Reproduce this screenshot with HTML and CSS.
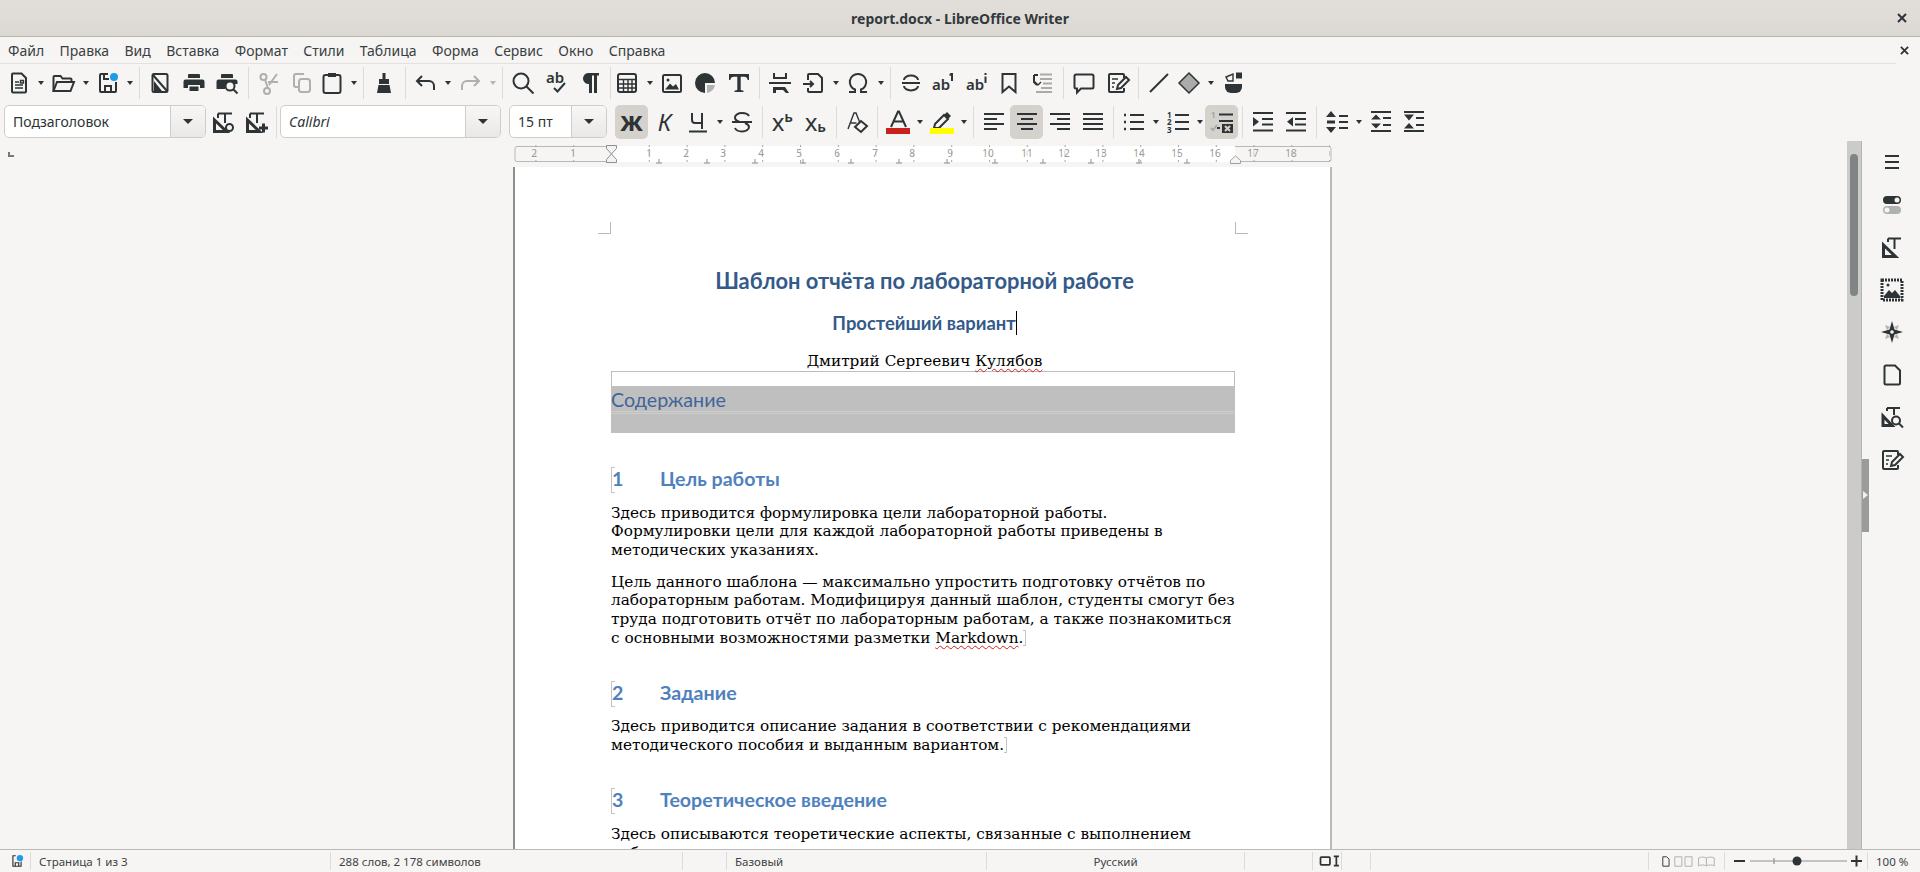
FILE: index.html
```html
<!DOCTYPE html>
<html lang="ru">
<head>
  <meta charset="UTF-8">
  <title>report.docx - LibreOffice Writer</title>
  <link rel="stylesheet" href="styles.css">
</head>
<body>

  <header class="titlebar">
    <span class="title">report.docx - LibreOffice Writer</span>
    <svg class="title-close" viewBox="0 0 10 10"><path d="M1 1l8 8M9 1l-8 8"/></svg>
  </header>

  <div class="menubar">
    <nav class="menu">
      <span>Файл</span><span>Правка</span><span>Вид</span><span>Вставка</span><span>Формат</span><span>Стили</span><span>Таблица</span><span>Форма</span><span>Сервис</span><span>Окно</span><span>Справка</span>
    </nav>
    <svg class="menu-close" viewBox="0 0 10 10"><path d="M1 1l8 8M9 1l-8 8"/></svg>
  </div>

  <!-- standard toolbar -->
  <div class="toolbar toolbar-std">
    <span class="btn"><svg class="ic" viewBox="0 0 24 24"><path d="M6 2.500h8.500l4.500 4.500v13.500a1 1 0 0 1-1 1H6a1 1 0 0 1-1-1v-17a1 1 0 0 1 1-1z"/><path class="thin" d="M8 11h4M8 14h8M8 17h8"/><path class="thin" d="M13.500 9.500h3v2.500h-3z"/></svg></span><span class="arrow"></span>
    <span class="btn"><svg class="ic" viewBox="0 0 24 24"><path d="M2.500 20V6a1 1 0 0 1 1-1h6l2 2.500h8a1 1 0 0 1 1 1V11"/><path d="M2.500 20l3.500-9h17l-3.500 9z"/></svg></span><span class="arrow"></span>
    <span class="btn"><svg class="ic" viewBox="0 0 24 24"><path d="M12 3H5a1 1 0 0 0-1 1v16a1 1 0 0 0 1 1h14a1 1 0 0 0 1-1v-9"/><path d="M8 3v5h5"/><path d="M9 20v-5h6v5"/><circle class="blue" cx="18" cy="6" r="4"/></svg></span><span class="arrow"></span>
    <span class="sep"></span>
    <span class="btn"><svg class="ic" viewBox="0 0 24 24"><rect x="4.500" y="3" width="15" height="18" rx="1.500"/><path d="M5 4l14 16"/><path class="f" d="M6 10l8 10H6z"/></svg></span>
    <span class="btn"><svg class="ic" viewBox="0 0 24 24"><path class="f" d="M7 3h10a1 1 0 0 1 1 1v3H6V4a1 1 0 0 1 1-1zM3.500 8.500h17a2 2 0 0 1 2 2V17H18v-3H6v3H1.500v-6.500a2 2 0 0 1 2-2zM7.500 15.500h9V20h-9z"/></svg></span>
    <span class="btn"><svg class="ic" viewBox="0 0 24 24"><path class="f" d="M7 3h10a1 1 0 0 1 1 1v3H6V4a1 1 0 0 1 1-1zM3.500 8.500h17a2 2 0 0 1 2 2V13H10v5H1.500v-7.500a2 2 0 0 1 2-2z"/><circle class="halo" cx="15" cy="15" r="4.500"/><path d="M18.500 18.500l4 4"/></svg></span>
    <span class="sep"></span>
    <span class="btn"><svg class="ic off" viewBox="0 0 24 24"><circle cx="6.500" cy="6" r="3"/><circle cx="10" cy="20" r="3"/><path d="M8 8.500l3 9M12 14L20 3M11 11h10"/></svg></span>
    <span class="btn"><svg class="ic off" viewBox="0 0 24 24"><path d="M8 16H6a2 2 0 0 1-2-2V5a2 2 0 0 1 2-2h8"/><rect x="9" y="8" width="11" height="13" rx="2.500"/></svg></span>
    <span class="btn tight"><svg class="ic" viewBox="0 0 24 24"><rect x="3.500" y="4" width="17" height="18" rx="2"/><path class="f" d="M8 2h8v4H8z"/></svg></span><span class="arrow"></span>
    <span class="sep"></span>
    <span class="btn"><svg class="ic" viewBox="0 0 24 24"><path class="f" d="M10.500 2h3v6h3.500v5H7V8h3.500z"/><path class="f" d="M6.500 14h11l1.500 8H5z"/></svg></span>
    <span class="sep"></span>
    <span class="btn"><svg class="ic" viewBox="0 0 24 24"><path d="M8 5L3 10l5 5"/><path d="M3 10h12a5 5 0 0 1 5 5v4"/></svg></span><span class="arrow"></span>
    <span class="btn"><svg class="ic off" viewBox="0 0 24 24"><path d="M16 5l5 5-5 5"/><path d="M21 10H9a5 5 0 0 0-5 5v4"/></svg></span><span class="arrow arrow-off"></span>
    <span class="sep"></span>
    <span class="btn"><svg class="ic" viewBox="0 0 24 24"><circle cx="10" cy="10" r="7.500"/><path d="M15.500 15.500l7 7"/></svg></span>
    <span class="btn"><svg class="ic" viewBox="0 0 24 24"><text class="ic-text" x="2" y="12">ab</text><path d="M10 17l3.500 3.500L21 12"/></svg></span>
    <span class="btn"><svg class="ic" viewBox="0 0 24 24"><path class="f" d="M10 2h11v2.500h-2V22h-3V4.500h-2V22h-3v-9a5.500 5.500 0 0 1-1-11z"/></svg></span>
    <span class="sep"></span>
    <span class="btn tight"><svg class="ic" viewBox="0 0 24 24"><rect x="3" y="3" width="18" height="18" rx="2"/><path class="thin" d="M3 8.500h18M3 13h18M3 17h18M8.500 8v13M13 8v13M17 8v13"/></svg></span><span class="arrow"></span>
    <span class="btn"><svg class="ic" viewBox="0 0 24 24"><rect x="3" y="4" width="18" height="17" rx="1.500"/><circle class="f" cx="8" cy="9" r="1.500"/><path class="f" d="M5 18.500l5-6 3 3 3-2.500 3 5.500z"/></svg></span>
    <span class="btn"><svg class="ic" viewBox="0 0 24 24"><path class="f" d="M12 2a10 10 0 1 0 0 20v-10h10A10 10 0 0 0 12 2z"/><path class="fg" d="M14 14h8a10 10 0 0 1-8 8z"/></svg></span>
    <span class="btn"><svg class="ic" viewBox="0 0 24 24"><path class="f" d="M2 3h20v6h-1.300c-.4-2-1.500-3.200-3.700-3.200h-3.300V19l2.800.8V21H7.500v-1.200l2.800-.8V5.800H7c-2.200 0-3.300 1.200-3.700 3.200H2z"/></svg></span>
    <span class="sep"></span>
    <span class="btn"><svg class="ic" viewBox="0 0 24 24"><path d="M6 2v5h12V2"/><path d="M1 12h22"/><path class="f" d="M5 16h12l4 6h-3l-3-3H8v3H5z"/></svg></span>
    <span class="btn"><svg class="ic" viewBox="0 0 24 24"><path d="M6 9V4a1 1 0 0 1 1-1h9l4 4v13a1 1 0 0 1-1 1H7a1 1 0 0 1-1-1v-3"/><path d="M1 13h10M8 10l3 3-3 3"/></svg></span><span class="arrow"></span>
    <span class="btn"><svg class="ic" viewBox="0 0 24 24"><path d="M3 21h6v-2.500A8 8 0 0 1 12 3a8 8 0 0 1 3 15.500V21h6"/></svg></span><span class="arrow"></span>
    <span class="sep"></span>
    <span class="btn"><svg class="ic" viewBox="0 0 24 24"><path d="M3 12h18M5 9a7 4.500 0 0 1 14 0M5 15a7 4.500 0 0 0 14 0"/></svg></span>
    <span class="btn"><svg class="ic" viewBox="0 0 24 24"><text class="ic-text" x="0" y="19">ab</text><path class="f" d="M18.500 2h2.500v8h-2V4.500l-1.500.5V3.300z"/></svg></span>
    <span class="btn"><svg class="ic" viewBox="0 0 24 24"><text class="ic-text" x="0" y="19">ab</text><path class="f" d="M18.500 2h2v2h-2zM18.500 5.500h2V12h-2z"/></svg></span>
    <span class="btn tight-sm"><svg class="ic" viewBox="0 0 24 24"><path d="M5.500 3h13v18L12 15.500 5.500 21z"/></svg></span>
    <span class="btn"><svg class="ic" viewBox="0 0 24 24"><path d="M3 4h4M3 4v7l3 3"/><path d="M4 11l3 3 3-3" class="thin"/><path class="grey-line" d="M9 3.500h12M9 8h12M12 12.500h9M10 17h11M5 21h16"/></svg></span>
    <span class="sep"></span>
    <span class="btn"><svg class="ic" viewBox="0 0 24 24"><path d="M4 3.500h16a1.500 1.500 0 0 1 1.500 1.500v11a1.500 1.500 0 0 1-1.500 1.500H9L5 21.500v-4H4A1.500 1.500 0 0 1 2.500 16V5A1.500 1.500 0 0 1 4 3.500z"/></svg></span>
    <span class="btn"><svg class="ic" viewBox="0 0 24 24"><path d="M18 7V4a1 1 0 0 0-1-1H4a1 1 0 0 0-1 1v16a1 1 0 0 0 1 1h13a1 1 0 0 0 1-1v-3"/><path class="thin" d="M6 8h6M6 12h3M6 16h2"/><path d="M11 18l1-4 8-8 3 3-8 8z"/></svg></span>
    <span class="sep"></span>
    <span class="btn"><svg class="ic" viewBox="0 0 24 24"><path d="M3 21L21 3"/></svg></span>
    <span class="btn tight"><svg class="ic ic-shape" viewBox="0 0 24 24"><path d="M12 2l10 10-10 10L2 12z"/></svg></span><span class="arrow"></span>
    <span class="btn"><svg class="ic" viewBox="0 0 24 24"><path class="f" d="M4 13h17v3a6 6 0 0 1-6 6H10a6 6 0 0 1-6-6z"/><path class="f" d="M15 1.500h6v6h-6z"/><path class="thin" d="M5 6l7-3v7H7z"/></svg></span>
  </div>

  <!-- formatting toolbar -->
  <div class="toolbar toolbar-fmt">
    <div class="combo combo-style"><span class="combo-text">Подзаголовок</span><span class="combo-arrow"></span></div>
    <span class="btn"><svg class="ic" viewBox="0 0 24 24"><path class="heavy" d="M3.500 21.500V10l12 11.500z"/><path d="M7 3.500h14M14 3.500V13M7 3.500V8"/><circle class="halo" cx="18.500" cy="17.500" r="3.500"/></svg></span>
    <span class="btn"><svg class="ic" viewBox="0 0 24 24"><path class="heavy" d="M3.500 21.500V10l12 11.500z"/><path d="M6 3.500h14M13 3.500V13M6 3.500V8"/><path class="heavy" d="M15 18h9M19.500 13.500v9"/></svg></span>
    <span class="sep"></span>
    <div class="combo combo-font"><span class="combo-text combo-italic">Calibri</span><span class="combo-arrow"></span></div>
    <div class="combo combo-size"><span class="combo-text">15 пт</span><span class="combo-arrow"></span></div>
    <span class="btn active glyph glyph-bold">Ж</span>
    <span class="btn glyph glyph-italic">К</span>
    <span class="btn"><svg class="ic" viewBox="0 0 24 24"><path d="M6 3v7a3 3 0 0 0 3 3h7M16 3v16M3 21.500h18"/></svg></span><span class="arrow"></span>
    <span class="btn"><svg class="ic" viewBox="0 0 24 24"><path d="M19 6c-1-2-3-3-7-3S5 5 5 7.500 7 11 9 11.500M2 12h20M15 13c2.500 1 4 2 4 4s-2.500 4.500-7 4.500c-3.500 0-6-1-7-3.500"/></svg></span>
    <span class="sep"></span>
    <span class="btn glyph glyph-script">х<span class="script-up">ь</span></span>
    <span class="btn glyph glyph-script">х<span class="script-down">ь</span></span>
    <span class="sep"></span>
    <span class="btn"><svg class="ic" viewBox="0 0 24 24"><path class="thin" d="M3 19l6-16h2l4 10M5.500 13h6"/><path d="M10 17l6-6 6 5-6 6z"/></svg></span>
    <span class="sep"></span>
    <span class="btn"><svg class="ic" viewBox="0 0 24 24"><path d="M5 17L12 1.500h1L20 17M7.500 11.500h10"/><path class="red" d="M0 18h24v6H0z"/></svg></span><span class="arrow"></span>
    <span class="btn"><svg class="ic" viewBox="0 0 24 24"><path d="M5 14l9-9 4 4-9 9H4z"/><path class="f" d="M14 5l3-3 4 4-3 3z"/><path class="yellow" d="M0 18h24v6H0z"/></svg></span><span class="arrow"></span>
    <span class="sep"></span>
    <span class="btn"><svg class="ic" viewBox="0 0 24 24"><path d="M2 4h20M2 9h13M2 14h20M2 19h13"/></svg></span>
    <span class="btn active"><svg class="ic" viewBox="0 0 24 24"><path d="M2 4h20M6 9h12M2 14h20M6 19h12"/></svg></span>
    <span class="btn"><svg class="ic" viewBox="0 0 24 24"><path d="M2 4h20M9 9h13M2 14h20M9 19h13"/></svg></span>
    <span class="btn"><svg class="ic" viewBox="0 0 24 24"><path d="M2 4h20M2 9h20M2 14h20M2 19h20"/></svg></span>
    <span class="sep"></span>
    <span class="btn"><svg class="ic" viewBox="0 0 24 24"><path d="M8 5h14M8 12h14M8 19h14"/><path class="dots" d="M2 5h2M2 12h2M2 19h2"/></svg></span><span class="arrow"></span>
    <span class="btn"><svg class="ic" viewBox="0 0 24 24"><text class="ic-num" x="1" y="7.500">1</text><text class="ic-num" x="1" y="15">2</text><text class="ic-num" x="1" y="22.500">3</text><path d="M9 5h14M9 12h14M9 19h14"/></svg></span><span class="arrow"></span>
    <span class="btn active"><svg class="ic" viewBox="0 0 24 24"><text class="ic-num ic-num-off" x="1" y="8">1</text><path d="M9 4.500h14M9 11h14M7 18h3"/><path class="grey-line" d="M1 18l2 2 4-5"/><path class="f" d="M12 14h11v9H12z"/><path class="xmark" d="M15 16l5 5M20 16l-5 5"/></svg></span>
    <span class="sep"></span>
    <span class="btn"><svg class="ic" viewBox="0 0 24 24"><path d="M2 3h20M11 9h11M11 14.500h11M2 20.500h20"/><path class="f" d="M2 7l6 4.800-6 4.800z"/></svg></span>
    <span class="btn"><svg class="ic" viewBox="0 0 24 24"><path d="M2 3h20M11 9h11M11 14.500h11M2 20.500h20"/><path class="f" d="M9 7l-6 4.800 6 4.800z"/></svg></span>
    <span class="sep"></span>
    <span class="btn"><svg class="ic" viewBox="0 0 24 24"><path d="M14 6h9M14 12h9M14 18h9"/><path class="f" d="M6 1l5 6H1zM1 17h10l-5 6zM2 10.500h8v3H2z"/></svg></span><span class="arrow"></span>
    <span class="btn"><svg class="ic" viewBox="0 0 24 24"><path d="M2 2h20M14 8h8M14 15h8M2 21h20"/><path class="f" d="M7 4.500l5 5H2zM2 13.500h10l-5 5z"/></svg></span>
    <span class="btn"><svg class="ic" viewBox="0 0 24 24"><path d="M2 2h20M14 8h8M14 15h8M2 21h20"/><path class="f" d="M2 4.500h10l-5 6zM7 13l5 5.500H2z"/></svg></span>
  </div>

  <main class="workspace">
    <div class="doc-column">
      <div class="ruler-row">
        <span class="ruler-corner"></span>
        <svg class="ruler" viewBox="0 0 822 22">
          <defs>
            <pattern id="ticks" x="59" y="0" width="37.800" height="22" patternUnits="userSpaceOnUse">
              <path d="M0 7v5" stroke="#a5a5a5" fill="none"/>
            </pattern>
            <pattern id="dots" x="97" y="0" width="37.800" height="22" patternUnits="userSpaceOnUse">
              <path d="M.5 1v2M.5 16v2" stroke="#a5a5a5" fill="none"/>
            </pattern>
          </defs>
          <rect x="1" y="2.500" width="816" height="15" rx="2" fill="#f6f5f4" stroke="#b8b8b6"/>
          <rect x="96" y="2" width="625" height="16" fill="#fff"/>
          <rect x="2" y="3" width="814" height="14" fill="url(#ticks)"/>
          <rect x="2" y="0" width="814" height="19" fill="url(#dots)"/>
          <g class="ruler-nums">
            <text x="20" y="13">2</text><text x="59" y="13">1</text><text x="135" y="13">1</text><text x="172" y="13">2</text><text x="209" y="13">3</text><text x="247" y="13">4</text><text x="285" y="13">5</text><text x="323" y="13">6</text><text x="361" y="13">7</text><text x="398" y="13">8</text><text x="436" y="13">9</text><text x="474" y="13">10</text><text x="513" y="13">11</text><text x="550" y="13">12</text><text x="587" y="13">13</text><text x="625" y="13">14</text><text x="663" y="13">15</text><text x="701" y="13">16</text><text x="739" y="13">17</text><text x="777" y="13">18</text>
          </g>
          <path d="M145 15v4M142 19h6M193 15v4M190 19h6M241 15v4M238 19h6M289 15v4M286 19h6M337 15v4M334 19h6M385 15v4M382 19h6M433 15v4M430 19h6M481 15v4M478 19h6M529 15v4M526 19h6M577 15v4M574 19h6M625 15v4M622 19h6M673 15v4M670 19h6" stroke="#8d8d8d" fill="none"/>
          <path d="M92.500 1.500h10v3L97.500 10l-5-5.500zM92.500 18.500h10v-3L97.500 10l-5 5.500z" fill="#f3f3f1" stroke="#8f8f8f"/>
          <path d="M716.500 19.500v-3l5-4.500 5 4.500v3z" fill="#f6f5f4" stroke="#a0a0a0"/>
        </svg>
      </div>
      <div class="canvas">
        <article class="page">
          <span class="crop crop-left"></span>
          <span class="crop crop-right"></span>
          <h1 class="doc-title">Шаблон отчёта по лабораторной работе</h1>
          <h2 class="doc-sub"><span class="cursor">Простейший вариант</span></h2>
          <p class="doc-author">Дмитрий Сергеевич <span class="typo">Кулябов</span></p>
          <div class="toc-empty"></div>
          <div class="toc">
            <div class="toc-head">Содержание</div>
            <div class="toc-body"></div>
          </div>
          <h3 class="section"><span class="section-num">1</span>Цель работы</h3>
          <p class="para">Здесь приводится формулировка цели лабораторной работы.<br>Формулировки цели для каждой лабораторной работы приведены в<br>методических указаниях.</p>
          <p class="para">Цель данного шаблона — максимально упростить подготовку отчётов по<br>лабораторным работам. Модифицируя данный шаблон, студенты смогут без<br>труда подготовить отчёт по лабораторным работам, а также познакомиться<br>с основными возможностями разметки <span class="typo">Markdown</span>.<span class="para-end"></span></p>
          <h3 class="section"><span class="section-num">2</span>Задание</h3>
          <p class="para">Здесь приводится описание задания в соответствии с рекомендациями<br>методического пособия и выданным вариантом.<span class="para-end"></span></p>
          <h3 class="section"><span class="section-num">3</span>Теоретическое введение</h3>
          <p class="para">Здесь описываются теоретические аспекты, связанные с выполнением<br>работы.</p>
        </article>
      </div>
    </div>

    <div class="scrollbar"><span class="scroll-thumb"></span></div>

    <aside class="sidebar">
      <span class="sidebar-handle"></span>
      <div class="sidebar-tabs">
        <svg class="ic" viewBox="0 0 24 24"><path d="M5 6h14M5 12h14M5 18h14"/></svg>
        <svg class="ic" viewBox="0 0 24 24"><rect class="f" x="3" y="3" width="18" height="8" rx="4"/><circle class="white" cx="17" cy="7" r="2.500"/><rect class="fg" x="3" y="13" width="18" height="8" rx="4"/><circle class="white" cx="7" cy="17" r="2.500"/></svg>
        <svg class="ic" viewBox="0 0 24 24"><path class="heavy" d="M3.500 21.500V10l12 11.500z"/><path d="M8 3.500h13M14.500 3.500V14M8 3.500V7"/></svg>
        <svg class="ic" viewBox="0 0 24 24"><rect class="dash-frame" x="2" y="2" width="20" height="20"/><path class="f" d="M4 20v-2l5-6 3 3 3-3 5 6v2z"/><circle class="f" cx="8" cy="7" r="1.500"/></svg>
        <svg class="ic" viewBox="0 0 24 24"><path class="fg" d="M5 5l5 2-3 3zM19 5l-2 5-3-3zM5 19l2-5 3 3zM19 19l-5-2 3-3z"/><path class="f" d="M12 1l2.500 8.500L23 12l-8.500 2.500L12 23l-2.500-8.500L1 12l8.500-2.500z"/><circle class="white" cx="12" cy="12" r="1.800"/></svg>
        <svg class="ic" viewBox="0 0 24 24"><path d="M6 2.500h9l5 5V20a1.500 1.500 0 0 1-1.500 1.500H6A1.500 1.500 0 0 1 4.500 20V4A1.500 1.500 0 0 1 6 2.500z"/></svg>
        <svg class="ic" viewBox="0 0 24 24"><path class="heavy" d="M3 20.500V11l9 9.500z"/><path d="M7 3h13M14 3v7M7 3v3"/><circle class="halo" cx="16" cy="15.500" r="4"/><path d="M19 18.500l4 4"/></svg>
        <svg class="ic" viewBox="0 0 24 24"><path d="M18 7V4a1 1 0 0 0-1-1H4a1 1 0 0 0-1 1v16a1 1 0 0 0 1 1h13a1 1 0 0 0 1-1v-3"/><path class="thin" d="M6 8h6M6 12h3M6 16h2"/><path d="M11 18l1-4 8-8 3 3-8 8z"/></svg>
      </div>
    </aside>
  </main>

  <footer class="statusbar">
    <span class="cell cell-icon"><svg class="ic ic-small" viewBox="0 0 24 24"><path d="M10 3H5v18h14v-8"/><path d="M9 21v-6h6v6"/><circle class="blue" cx="17" cy="7" r="5.500"/></svg></span>
    <span class="cell">Страница 1 из 3</span>
    <span class="cell">288 слов, 2 178 символов</span>
    <span class="cell"></span>
    <span class="cell">Базовый</span>
    <span class="cell cell-center">Русский</span>
    <span class="cell"></span>
    <span class="cell cell-mode"><svg class="ic ic-mode" viewBox="0 0 24 14"><rect x="1.500" y="2.500" width="11" height="9" rx="1"/><path d="M17 1.500h6M17 12.500h6M20 1.500v11"/></svg></span>
    <span class="cell"></span>
    <span class="cell"></span>
    <span class="cell cell-views">
      <svg class="ic ic-view" viewBox="0 0 10 14"><path d="M1 1h5l3 3v9H1z"/></svg>
      <svg class="ic ic-view off" viewBox="0 0 24 14"><path d="M1 1h9v12H1zM14 1h9v12h-9z"/></svg>
      <svg class="ic ic-view off" viewBox="0 0 24 14"><path d="M12 2.500c-3-1.500-7-1.500-10 0v10c3-1.500 7-1.500 10 0 3-1.500 7-1.500 10 0v-10c-3-1.500-7-1.500-10 0zM12 2.500v10"/></svg>
    </span>
    <span class="cell cell-zoom">
      <svg class="zoom" viewBox="0 0 134 14">
        <path class="zoom-ctl" d="M0 7h11M117 7h11M122.500 1.500v11"/>
        <path class="zoom-track" d="M16 7h97M40 4v6"/>
        <circle class="zoom-knob" cx="63" cy="7" r="4.500"/>
      </svg>
    </span>
    <span class="cell cell-pct">100 %</span>
  </footer>

</body>
</html>
```

FILE: styles.css
```css
* {
  box-sizing: border-box;
}
html, body {
  margin: 0;
  height: 872px;
  overflow: hidden;
}
body {
  background: #f6f5f4;
  color: #2e3436;
  font-family: "Noto Sans", sans-serif;
  display: flex;
  flex-direction: column;
}

/* title + menu */
.titlebar {
  height: 37px;
  background: linear-gradient(#e2dfdb, #dcd9d5);
  border-bottom: 1px solid #bdb6ab;
  display: flex;
  align-items: center;
  justify-content: center;
  position: relative;
}
.title {
  font-size: 14px;
  font-weight: 700;
  color: #33393b;
}
.title-close {
  position: absolute;
  right: 13px;
  top: 13px;
  width: 10px;
  height: 10px;
}
.title-close path, .menu-close path {
  stroke: #2e3436;
  stroke-width: 2;
  fill: none;
}
.menubar {
  height: 27px;
  display: flex;
}
.menu {
  width: 1896px;
  height: 27px;
  padding-left: 8px;
  border-bottom: 1px solid #e2e1de;
  display: flex;
  align-items: center;
  gap: 15.45px;
  font-size: 14px;
  color: #3a3f41;
}
.menu-close {
  width: 9px;
  height: 9px;
  margin: 9px 0 0 4px;
}

/* toolbars */
.toolbar {
  display: flex;
  align-items: center;
}
.toolbar-std {
  height: 38px;
  padding-left: 2px;
}
.toolbar-fmt {
  height: 39px;
  padding-left: 4px;
}
.btn {
  flex: none;
  width: 33px;
  height: 34px;
  display: flex;
  align-items: center;
  justify-content: center;
  border-radius: 5px;
}
.toolbar-std .btn {
  width: 33.5px;
}
.toolbar-std .tight {
  margin-left: -4px;
}
.toolbar-std .tight-sm {
  margin-left: -2px;
}
.active {
  background: #d5d1cc;
}
.arrow {
  flex: none;
  width: 11px;
  display: flex;
  justify-content: center;
}
.arrow::before {
  content: "";
  border-top: 4px solid #2e3436;
  border-left: 3.5px solid transparent;
  border-right: 3.5px solid transparent;
}
.arrow-off::before {
  border-top-color: #b4b5b4;
}
.sep {
  flex: none;
  width: 1px;
  height: 32px;
  margin: 0 3.5px;
  background: #dcdbd8;
}

/* icons */
.ic {
  width: 24px;
  height: 24px;
  flex: none;
  fill: none;
  stroke: #2e3436;
  stroke-width: 2;
  stroke-linecap: butt;
  overflow: visible;
}
.ic .thin {
  stroke-width: 1.4;
}
.ic .heavy {
  stroke-width: 3;
}
.ic .f {
  fill: #2e3436;
  stroke: none;
}
.ic .fg {
  fill: #b0b1b1;
  stroke: none;
}
.ic .blue {
  fill: #1e9be9;
  stroke: none;
}
.ic .red {
  fill: #c9211e;
  stroke: none;
}
.ic .yellow {
  fill: #ffff00;
  stroke: none;
}
.ic .white {
  fill: #f6f5f4;
  stroke: none;
}
.ic .halo {
  fill: #f6f5f4;
  stroke-width: 2;
}
.ic .grey-line {
  stroke: #a9aaa9;
}
.ic .dots {
  stroke-width: 2.5;
}
.ic .xmark {
  stroke: #d5d1cc;
}
.ic.off {
  stroke: #aeafae;
}
.ic-shape path {
  fill: #ababab;
  stroke-width: 1.5;
}
.ic-text {
  font-family: "Noto Sans", sans-serif;
  font-size: 15px;
  font-weight: 600;
  fill: #2e3436;
  stroke: none;
}
.ic-num {
  font-family: "Noto Sans", sans-serif;
  font-size: 8px;
  font-weight: 700;
  fill: #2e3436;
  stroke: none;
}
.ic-num-off {
  fill: #a5a5a5;
}
.dash-frame {
  stroke-width: 3;
  stroke-dasharray: 2 1;
}
.glyph {
  color: #2e3436;
  line-height: 1;
}
.glyph-bold {
  font-size: 22px;
  font-weight: 800;
}
.glyph-italic {
  font-size: 24px;
  font-style: italic;
}
.glyph-script {
  font-size: 24px;
}
.script-up, .script-down {
  font-size: 15px;
  font-weight: 600;
}
.script-up {
  margin-bottom: 10px;
}
.script-down {
  margin-top: 10px;
}

/* combo boxes */
.combo {
  flex: none;
  height: 33px;
  display: flex;
  align-items: center;
  background: #fff;
  border: 1px solid #cfcdc9;
  border-radius: 5px;
  font-size: 14px;
  color: #2e3436;
}
.combo-text {
  flex: 1;
  padding-left: 8px;
}
.combo-italic {
  font-style: italic;
}
.combo-arrow {
  flex: none;
  width: 35px;
  height: 100%;
  display: flex;
  align-items: center;
  justify-content: center;
  background: linear-gradient(#f8f7f6, #e9e8e6);
  border-left: 1px solid #cfcdc9;
  border-radius: 0 4px 4px 0;
}
.combo-arrow::before {
  content: "";
  border-top: 5px solid #2e3436;
  border-left: 5px solid transparent;
  border-right: 5px solid transparent;
}
.combo-style {
  width: 202px;
}
.combo-font {
  width: 221px;
  margin-right: 8px;
}
.combo-size {
  width: 98px;
  margin-right: 8px;
}

/* workspace */
.workspace {
  flex: 1;
  min-height: 0;
  display: flex;
}
.doc-column {
  flex: 1;
  min-width: 0;
  display: flex;
  flex-direction: column;
}
.ruler-row {
  height: 26px;
  flex: none;
  display: flex;
}
.ruler-corner {
  width: 6px;
  height: 5px;
  margin: 11px 0 0 8px;
  border-left: 2px solid #777;
  border-bottom: 2px solid #777;
}
.ruler {
  width: 822px;
  height: 22px;
  margin: 3px 0 0 500px;
  font-family: "Noto Sans", sans-serif;
}
.ruler-nums text {
  font-size: 10px;
  fill: #9b9b9b;
  text-anchor: middle;
}
.canvas {
  flex: 1;
  min-height: 0;
  overflow: hidden;
  padding-left: 513px;
}

/* the page */
.page {
  position: relative;
  width: 819px;
  min-height: 800px;
  background: #fff;
  border-left: 2px solid #8f8f8f;
  border-right: 2px solid #b9b9b9;
  padding: 99px 92px 0 96px;
  color: #000;
  font-family: "DejaVu Serif", serif;
  font-size: 15.3px;
  line-height: 18.7px;
  white-space: nowrap;
}
.crop {
  position: absolute;
  top: 55px;
  width: 13px;
  height: 12px;
  border-bottom: 1px solid #b9b9b9;
}
.crop-left {
  left: 83px;
  border-right: 1px solid #b9b9b9;
}
.crop-right {
  right: 82px;
  border-left: 1px solid #b9b9b9;
}
.doc-title, .doc-sub, .section, .toc-head {
  font-family: Lato, "Noto Sans", sans-serif;
}
.doc-title {
  margin: 0;
  height: 30px;
  font-size: 21.9px;
  line-height: 30px;
  font-weight: 700;
  text-align: center;
  color: #345a8a;
}
.doc-sub {
  margin: 15px 0 0;
  height: 24px;
  font-size: 18.4px;
  line-height: 24px;
  font-weight: 700;
  text-align: center;
  color: #345a8a;
}
.cursor {
  border-right: 1px solid #000;
  display: inline-block;
  height: 24px;
}
.doc-author {
  margin: 17px 0 0;
  height: 19px;
  text-align: center;
}
.typo {
  text-decoration: underline wavy #d42020 1px;
  text-underline-offset: 2px;
}
.toc-empty {
  width: 624px;
  height: 15px;
  border: 1px solid #bdbdbd;
  border-bottom-width: 0;
}
.toc {
  width: 624px;
  height: 47px;
  background: #bfbfbf;
}
.toc-head {
  height: 26px;
  font-size: 19.7px;
  line-height: 27px;
  color: #40659a;
  border-bottom: 1px solid #cdcdcd;
}
.toc-body {
  height: 20px;
  margin-top: 1px;
  border-top: 1px solid #cdcdcd;
}
.section {
  position: relative;
  display: flex;
  align-items: center;
  height: 24px;
  margin: 34px 0 0;
  font-size: 19.6px;
  font-weight: 700;
  color: #4f81bd;
}
.section::before {
  content: "";
  position: absolute;
  left: 0;
  top: 0;
  width: 3px;
  height: 24px;
  border: 1px solid #c4c4c4;
  border-right: 0;
}
.section-num {
  width: 49px;
  padding-left: 1px;
}
.para {
  margin: 13px 0 0;
}
.section + .para {
  margin-top: 12.5px;
}
.para + .section {
  margin-top: 33.5px;
}
.para-end {
  display: inline-block;
  width: 3px;
  height: 16px;
  margin-bottom: -3px;
  border: 1px solid #c4c4c4;
  border-left: 0;
}

/* scrollbar + sidebar */
.scrollbar {
  width: 15px;
  flex: none;
  padding: 13px 0 0 3px;
  background: #cbcbca;
  border-right: 1px solid #b4b4b4;
}
.scroll-thumb {
  display: block;
  width: 8px;
  height: 142px;
  border-radius: 4px;
  background: #808484;
}
.sidebar {
  width: 58px;
  flex: none;
  display: flex;
  position: relative;
}
.sidebar-handle {
  position: absolute;
  left: 0;
  top: 318px;
  width: 7px;
  height: 73px;
  background: #9a9c9b;
}
.sidebar-handle::after {
  content: "";
  position: absolute;
  left: 1px;
  top: 32px;
  border-left: 5px solid #f0f0ee;
  border-top: 4px solid transparent;
  border-bottom: 4px solid transparent;
}
.sidebar-tabs {
  width: 100%;
  padding: 9px 0 0 18px;
  display: flex;
  flex-direction: column;
  gap: 18.5px;
}

/* status bar */
.statusbar {
  height: 23px;
  flex: none;
  border-top: 1px solid #b9b9b7;
  padding: 2px 0;
  display: grid;
  grid-template-columns: 31px 300px 352px 44px 260px 258px 68px 29px 29px 278px 76px 143px 52px;
  font-size: 11.5px;
  color: #3d4244;
}
.cell {
  display: flex;
  align-items: center;
  padding-left: 8px;
  border-right: 1px solid #dcdbd8;
  white-space: nowrap;
  overflow: hidden;
}
.cell-icon {
  padding-left: 10px;
}
.cell-center {
  justify-content: center;
  padding-left: 0;
}
.cell-mode {
  padding-left: 6px;
}
.ic-small {
  width: 14px;
  height: 14px;
}
.ic-mode {
  width: 21px;
  height: 12px;
  stroke-width: 2;
}
.ic-view {
  height: 11px;
  width: auto;
  stroke-width: 1.2;
}
.cell-views {
  gap: 4px;
  padding-left: 13px;
}
.cell-zoom {
  padding-left: 9px;
}
.zoom {
  width: 134px;
  height: 14px;
  flex: none;
}
.zoom-ctl {
  stroke: #2e3436;
  stroke-width: 2;
  fill: none;
}
.zoom-track {
  stroke: #8f9192;
  stroke-width: 1.2;
  fill: none;
}
.zoom-knob {
  fill: #2e3436;
}
.cell-pct {
  border-right: 0;
}
```
